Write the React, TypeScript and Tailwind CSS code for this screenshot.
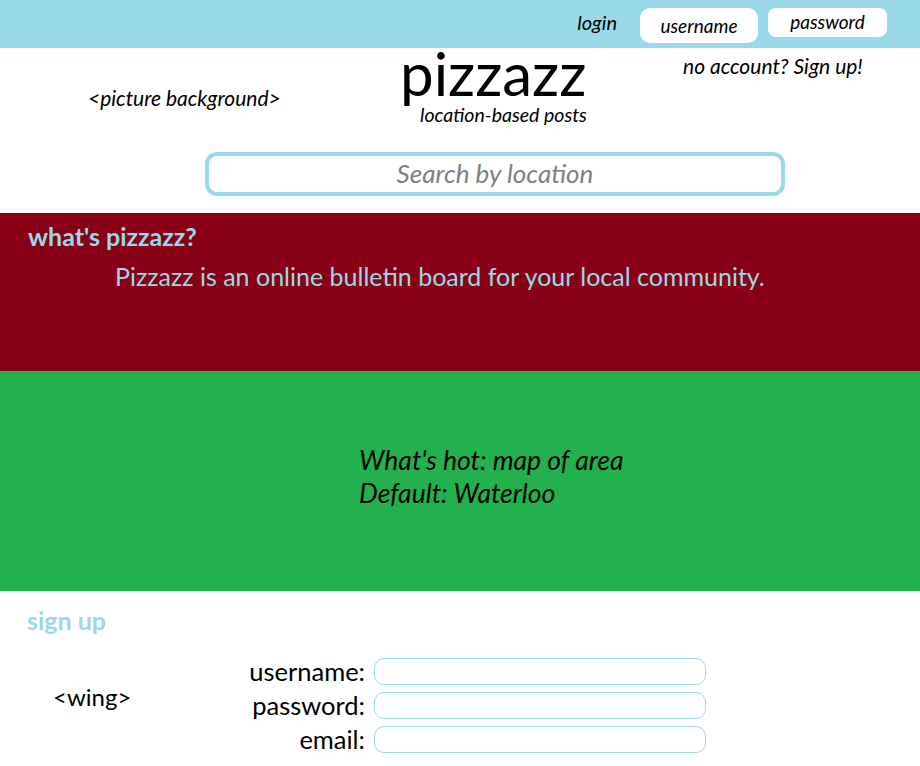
import React from 'react';

const font = { fontFamily: 'Lato, "Open Sans", sans-serif' };

const SignupRow: React.FC<{ label: string; className?: string }> = ({ label, className }) => (
  <div className={`flex items-center ${className ?? ''}`}>
    <span className="w-[366px] text-right text-[25.5px] leading-none text-black pr-[1px]">{label}</span>
    <div className="ml-[8px] w-[332px] h-[27px] rounded-[10px] border border-[#99d9ea] bg-white" />
  </div>
);

const App: React.FC = () => {
  return (
    <div className="w-[920px] h-[766px] bg-white overflow-hidden" style={font}>
      {/* top login bar */}
      <div className="h-[48px] bg-[#99d9ea] flex items-start justify-end pr-[33px]">
        <span className="mt-[7px] text-[20px] italic text-black">login</span>
        <div className="ml-[23px] mt-[8px] w-[118px] h-[35px] rounded-[10px] bg-white flex items-center justify-center pt-[2px]">
          <span className="text-[19px] italic text-black">username</span>
        </div>
        <div className="ml-[10px] mt-[8px] w-[119px] h-[29px] rounded-[8px] bg-white flex items-center justify-center">
          <span className="text-[19px] italic text-black">password</span>
        </div>
      </div>

      {/* header */}
      <div className="h-[165px]">
        <div className="flex">
          <div className="w-[400px] pl-[88px] pt-[34px]">
            <span className="text-[21px] italic text-black">&lt;picture background&gt;</span>
          </div>
          <div className="w-[260px] flex flex-col">
            <span className="text-[60px] leading-none text-black mt-[-5px]">pizzazz</span>
            <span className="text-[19.5px] italic text-black leading-none ml-[20px] mt-[2px]">location-based posts</span>
          </div>
          <div className="pt-[2px] pl-[23px]">
            <span className="text-[21px] italic text-black">no account? Sign up!</span>
          </div>
        </div>
        <div className="ml-[205px] mt-[27px] w-[580px] h-[44px] rounded-[12px] border-[4px] border-[#99d9ea] flex items-center justify-center">
          <span className="text-[26px] italic text-[#7f7f7f]">Search by location</span>
        </div>
      </div>

      {/* what's pizzazz */}
      <div className="h-[158px] bg-[#880015] pl-[28px] pt-[8px]">
        <h2 className="text-[25px] font-bold text-[#99d9ea] leading-tight">what's pizzazz?</h2>
        <p className="ml-[87px] mt-[9px] text-[25px] text-[#99d9ea] leading-tight">
          Pizzazz is an online bulletin board for your local community.
        </p>
      </div>

      {/* map placeholder */}
      <div className="h-[220px] bg-[#22b14c] pl-[359px] pt-[73px]">
        <p className="text-[26.5px] italic text-black leading-[33px]">What's hot: map of area</p>
        <p className="text-[26.5px] italic text-black leading-[33px]">Default: Waterloo</p>
      </div>

      {/* sign up */}
      <div className="pt-[14px]">
        <h2 className="ml-[27px] text-[25px] font-bold text-[#99d9ea] leading-tight">sign up</h2>
        <div className="relative mt-[22px]">
          <span className="absolute left-[53px] top-[27px] text-[24px] text-black leading-none">&lt;wing&gt;</span>
          <SignupRow label="username:" />
          <SignupRow label="password:" className="mt-[7px]" />
          <SignupRow label="email:" className="mt-[7px]" />
        </div>
      </div>
    </div>
  );
};

export default App;
